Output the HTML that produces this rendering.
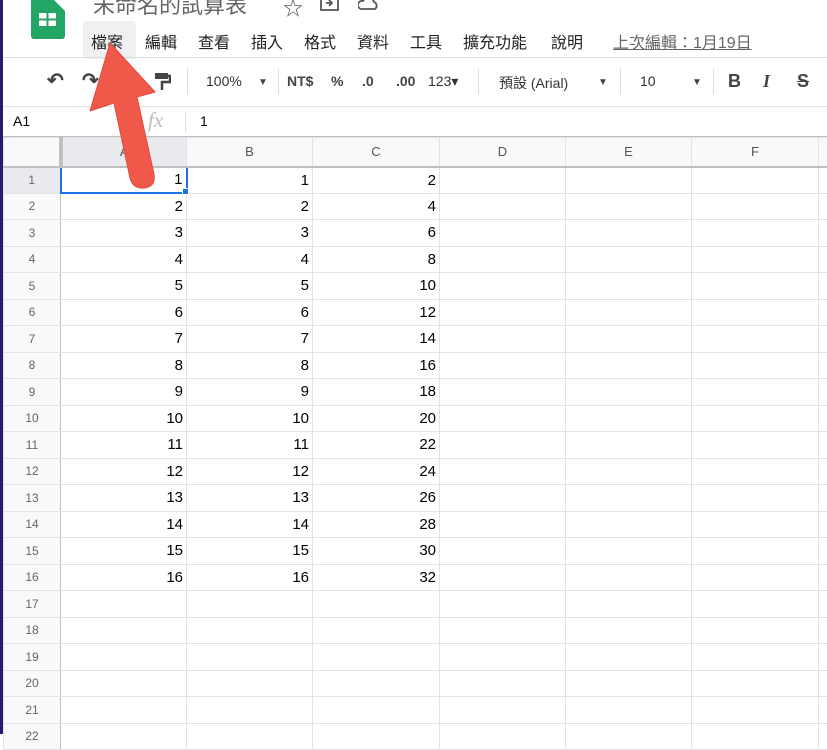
<!DOCTYPE html>
<html><head><meta charset="utf-8"><style>
*{margin:0;padding:0;box-sizing:border-box}
body{width:827px;height:734px;overflow:hidden;background:#fff;font-family:"Liberation Sans","Noto Sans CJK TC",sans-serif;position:relative}
.strip{position:absolute;left:0;top:0;width:3px;height:734px;background:#2a1a6e;z-index:5}
.title{position:absolute;left:93px;top:-12px;font-size:22px;color:#666}
.menu{position:absolute;top:29px;font-size:16px;color:#222}
.hl{position:absolute;left:83px;top:21px;width:53px;height:38px;background:#eef0f2;border-radius:4px}
.tb{position:absolute;left:3px;top:57px;width:824px;height:1px;background:#dadce0}
.tb2{position:absolute;left:3px;top:106px;width:824px;height:1px;background:#e2e3e3}
.t{position:absolute;top:73px;font-size:14px;color:#444;font-weight:bold}
.sep{position:absolute;top:69px;width:1px;height:25px;background:#dadce0}
.grid{position:absolute;left:3px;top:137px;width:840px}
table{border-collapse:collapse;table-layout:fixed;width:835px}
td{border:1px solid #e2e3e3;height:26.5px;font-size:15px;text-align:right;padding-right:3px;color:#000}
td.rh{background:#f8f9fa;text-align:center;font-size:12px;color:#666;padding:0;border-color:#c0c0c0 #c0c0c0 #e2e3e3 #e2e3e3}
tr.h td{background:#f8f9fa;text-align:center;font-size:13px;color:#555;height:29px;border-bottom:2px solid #c0c0c0;padding:0}
</style></head><body>
<div class="strip"></div>
<svg style="position:absolute;left:31px;top:0" width="34" height="40"><path d="M0 0H23L34 11V36a3 3 0 0 1-3 3H3a3 3 0 0 1-3-3Z" fill="#23a566"/><rect x="8" y="13" width="17" height="13" fill="#fff"/><path d="M8 19.5H25M16.5 13V26" stroke="#23a566" stroke-width="2"/></svg>
<div class="title">未命名的試算表</div>
<div style="position:absolute;left:283px;top:-8px;font-size:20px;color:#555">☆</div>
<svg style="position:absolute;left:320px;top:0" width="20" height="12"><rect x="1" y="-6" width="17" height="16" fill="none" stroke="#555" stroke-width="1.8"/><path d="M6 3H12M9 0L12 3L9 6" stroke="#555" stroke-width="1.8" fill="none"/></svg>
<svg style="position:absolute;left:358px;top:0" width="22" height="12"><path d="M3 9a4 4 0 0 1 2-8 6 6 0 0 1 11 1 4 4 0 0 1 1 7Z" fill="none" stroke="#555" stroke-width="1.8"/></svg>
<div class="hl"></div>
<div class="menu" style="left:91px">檔案</div>
<div class="menu" style="left:145px">編輯</div>
<div class="menu" style="left:198px">查看</div>
<div class="menu" style="left:251px">插入</div>
<div class="menu" style="left:304px">格式</div>
<div class="menu" style="left:357px">資料</div>
<div class="menu" style="left:410px">工具</div>
<div class="menu" style="left:463px">擴充功能</div>
<div class="menu" style="left:551px">說明</div>
<div class="menu" style="left:613px;color:#666;text-decoration:underline">上次編輯：1月19日</div>
<div class="tb"></div>
<div class="t" style="left:47px;font-size:20px;top:68px">↶</div>
<div class="t" style="left:82px;font-size:20px;top:68px">↷</div>
<svg style="position:absolute;left:155px;top:73px" width="16" height="18"><rect x="0" y="0" width="13" height="6" fill="#444"/><path d="M13 3H15V9H7V17" stroke="#444" stroke-width="2.5" fill="none"/></svg>
<div class="sep" style="left:187px"></div>
<div class="t" style="left:206px;font-weight:normal;color:#333">100%</div>
<div class="t" style="left:258px;font-size:10px;top:77px">▼</div>
<div class="sep" style="left:278px"></div>
<div class="t" style="left:287px">NT$</div>
<div class="t" style="left:331px">%</div>
<div class="t" style="left:362px">.0</div>
<div class="t" style="left:396px">.00</div>
<div class="t" style="left:428px;font-weight:normal;color:#333">123▾</div>
<div class="sep" style="left:478px"></div>
<div class="t" style="left:499px;font-weight:normal;color:#333">預設 (Arial)</div>
<div class="t" style="left:598px;font-size:10px;top:77px">▼</div>
<div class="sep" style="left:620px"></div>
<div class="t" style="left:640px;font-weight:normal;color:#333">10</div>
<div class="t" style="left:692px;font-size:10px;top:77px">▼</div>
<div class="sep" style="left:713px"></div>
<div class="t" style="left:728px;font-size:18px;top:71px">B</div>
<div class="t" style="left:763px;font-size:18px;top:71px;font-style:italic;font-family:'Liberation Serif',serif">I</div>
<div class="t" style="left:797px;font-size:18px;top:71px;text-decoration:line-through">S</div>
<div class="tb2"></div>
<div style="position:absolute;left:13px;top:113px;font-size:14px">A1</div>
<div style="position:absolute;left:148px;top:108px;font-size:21px;color:#bbb;font-style:italic;font-family:'Liberation Serif',serif">fx</div>
<div style="position:absolute;left:185px;top:112px;width:1px;height:20px;background:#ddd"></div>
<div style="position:absolute;left:200px;top:113px;font-size:14px">1</div>
<div style="position:absolute;left:3px;top:136px;width:824px;height:1px;background:#c0c0c0"></div>
<div class="grid"><table>
<colgroup><col style="width:57px"><col style="width:126px"><col style="width:126px"><col style="width:127px"><col style="width:126px"><col style="width:126px"><col style="width:127px"><col style="width:20px"></colgroup>
<tr class="h"><td style="border-right:4px solid #c0c0c0"></td><td style="background:#e8eaed">A</td><td>B</td><td>C</td><td>D</td><td>E</td><td>F</td><td></td></tr>
<tr><td class="rh" style="background:#e8eaed">1</td><td style="border:2px solid #1a73e8">1</td><td>1</td><td>2</td><td></td><td></td><td></td><td></td></tr>
<tr><td class="rh">2</td><td>2</td><td>2</td><td>4</td><td></td><td></td><td></td><td></td></tr>
<tr><td class="rh">3</td><td>3</td><td>3</td><td>6</td><td></td><td></td><td></td><td></td></tr>
<tr><td class="rh">4</td><td>4</td><td>4</td><td>8</td><td></td><td></td><td></td><td></td></tr>
<tr><td class="rh">5</td><td>5</td><td>5</td><td>10</td><td></td><td></td><td></td><td></td></tr>
<tr><td class="rh">6</td><td>6</td><td>6</td><td>12</td><td></td><td></td><td></td><td></td></tr>
<tr><td class="rh">7</td><td>7</td><td>7</td><td>14</td><td></td><td></td><td></td><td></td></tr>
<tr><td class="rh">8</td><td>8</td><td>8</td><td>16</td><td></td><td></td><td></td><td></td></tr>
<tr><td class="rh">9</td><td>9</td><td>9</td><td>18</td><td></td><td></td><td></td><td></td></tr>
<tr><td class="rh">10</td><td>10</td><td>10</td><td>20</td><td></td><td></td><td></td><td></td></tr>
<tr><td class="rh">11</td><td>11</td><td>11</td><td>22</td><td></td><td></td><td></td><td></td></tr>
<tr><td class="rh">12</td><td>12</td><td>12</td><td>24</td><td></td><td></td><td></td><td></td></tr>
<tr><td class="rh">13</td><td>13</td><td>13</td><td>26</td><td></td><td></td><td></td><td></td></tr>
<tr><td class="rh">14</td><td>14</td><td>14</td><td>28</td><td></td><td></td><td></td><td></td></tr>
<tr><td class="rh">15</td><td>15</td><td>15</td><td>30</td><td></td><td></td><td></td><td></td></tr>
<tr><td class="rh">16</td><td>16</td><td>16</td><td>32</td><td></td><td></td><td></td><td></td></tr>
<tr><td class="rh">17</td><td></td><td></td><td></td><td></td><td></td><td></td><td></td></tr>
<tr><td class="rh">18</td><td></td><td></td><td></td><td></td><td></td><td></td><td></td></tr>
<tr><td class="rh">19</td><td></td><td></td><td></td><td></td><td></td><td></td><td></td></tr>
<tr><td class="rh">20</td><td></td><td></td><td></td><td></td><td></td><td></td><td></td></tr>
<tr><td class="rh">21</td><td></td><td></td><td></td><td></td><td></td><td></td><td></td></tr>
<tr><td class="rh">22</td><td></td><td></td><td></td><td></td><td></td><td></td><td></td></tr>
</table></div>
<div style="position:absolute;left:182px;top:188px;width:7px;height:7px;background:#1a73e8;border:1px solid #fff"></div>
<svg style="position:absolute;left:0;top:0" width="200" height="200"><path d="M110 43L155 92L137 97L154 174Q156 187 144 188Q133 189 130 178L114 103L90 111Z" fill="#f0584a" stroke="#e04a3c" stroke-width="1" stroke-linejoin="round"/></svg>
</body></html>
